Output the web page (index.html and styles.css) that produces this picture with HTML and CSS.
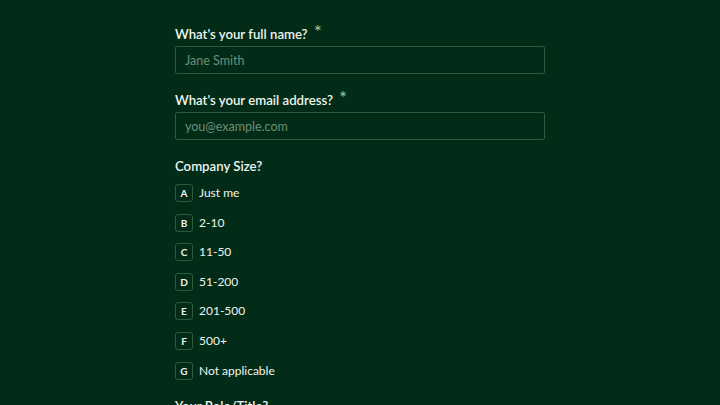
FILE: index.html
```html
<!DOCTYPE html>
<html lang="en">
<head>
    <meta charset="UTF-8">
    <meta name="viewport" content="width=device-width, initial-scale=1.0">
    <title>Signup</title>
    <link rel="stylesheet" href="styles.css">
</head>
<body>
    <form class="form">
        <div class="field">
            <label class="label">What's your full name? <span class="req">*</span></label>
            <input class="input" type="text" placeholder="Jane Smith">
        </div>
        <div class="field">
            <label class="label">What's your email address? <span class="req">*</span></label>
            <input class="input" type="email" placeholder="you@example.com">
        </div>
        <div class="field">
            <label class="label">Company Size?</label>
            <div class="options">
                <div class="option"><span class="key">A</span>Just me</div>
                <div class="option"><span class="key">B</span>2-10</div>
                <div class="option"><span class="key">C</span>11-50</div>
                <div class="option"><span class="key">D</span>51-200</div>
                <div class="option"><span class="key">E</span>201-500</div>
                <div class="option"><span class="key">F</span>500+</div>
                <div class="option"><span class="key">G</span>Not applicable</div>
            </div>
        </div>
        <div class="field">
            <label class="label">Your Role/Title?</label>
        </div>
    </form>
</body>
</html>
```

FILE: styles.css
```css
:root {
    --bg: #022c17;
    --text: #eef4ef;
    --muted: #6d8f77;
    --border: #2e5a3d;
    --accent: #8dbd98;
}

body {
    margin: 0;
    background: var(--bg);
    color: var(--text);
    font-family: Lato, "Open Sans", sans-serif;
    height: 405px;
    overflow: hidden;
}

.form {
    width: 370px;
    margin: 0 auto;
    padding-top: 24px;
    display: flex;
    flex-direction: column;
    gap: 16px;
}

.field {
    display: flex;
    flex-direction: column;
}

.label {
    font-size: 13.2px;
    font-weight: 600;
    line-height: 20px;
    height: 20px;
    margin-bottom: 2px;
}

.req {
    color: var(--accent);
    font-size: 18px;
    line-height: 0;
    position: relative;
    top: -1px;
    margin-left: 3px;
}

.input {
    box-sizing: border-box;
    height: 28px;
    background: transparent;
    border: 1px solid var(--border);
    border-radius: 2px;
    padding: 0 9px;
    font-family: inherit;
    font-size: 12.5px;
    color: var(--text);
}

.input::placeholder {
    color: var(--muted);
}

.options {
    display: flex;
    flex-direction: column;
    gap: 11.6px;
    margin-top: 6px;
}

.option {
    display: flex;
    align-items: center;
    gap: 6px;
    font-size: 12px;
    line-height: 18px;
}

.key {
    box-sizing: border-box;
    width: 18px;
    height: 18px;
    border: 1px solid var(--border);
    border-radius: 3px;
    display: flex;
    align-items: center;
    justify-content: center;
    font-size: 10px;
    font-weight: 700;
}
```
